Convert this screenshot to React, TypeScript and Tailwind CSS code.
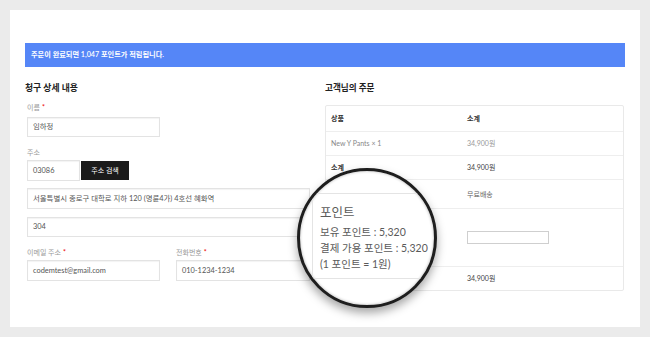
import React from 'react'

const font = { fontFamily: 'Lato, "Noto Sans CJK KR", sans-serif' }

function Label({ text, required }: { text: string; required?: boolean }) {
  return (
    <div className="h-[10px] text-[7px] leading-[10px] text-[#999]">
      {text}
      {required && <span className="ml-[2px] text-[#e00]">*</span>}
    </div>
  )
}

function Field({ value, className }: { value: string; className: string }) {
  return (
    <div
      className={`flex items-center border border-[#e3e3e3] bg-white px-[5px] text-[7.4px] text-[#555] shadow-[inset_0_1px_1px_rgba(0,0,0,0.05)] ${className}`}
    >
      {value}
    </div>
  )
}

const rows = [
  { left: '상품', right: '소계', h: 'h-[25px]', lc: 'text-[#333] font-semibold', rc: 'text-[#333] font-semibold' },
  { left: 'New Y Pants × 1', right: '34,900원', h: 'h-[24px]', lc: 'text-[#888]', rc: 'text-[#999]' },
  { left: '소계', right: '34,900원', h: 'h-[24px]', lc: 'text-[#333] font-semibold', rc: 'text-[#444]' },
  { left: '', right: '무료배송', h: 'h-[29px]', lc: 'text-[#333] font-semibold', rc: 'text-[#666]' },
]

export default function App() {
  return (
    <div className="relative h-[337px] w-[650px] overflow-hidden bg-[#ebebeb] p-[10px]" style={font}>
      <div className="h-[317px] bg-white px-[15px] pt-[33px]">
        <div className="flex h-[24px] items-center bg-[#5586f7] pl-[6px] text-[7.2px] font-semibold text-white">
          주문이 완료되면 1,047 포인트가 적립됩니다.
        </div>

        <div className="mt-[14px] flex">
          {/* billing details */}
          <div className="w-[285px]">
            <h2 className="h-[14px] text-[8.8px] font-bold leading-[14px] text-[#222]">청구 상세 내용</h2>
            <div className="ml-[2px]">
              <div className="mt-[7px]">
                <Label text="이름" required />
              </div>
              <Field value="임하정" className="mt-[5px] h-[20px] w-[133px]" />
              <div className="mt-[10px]">
                <Label text="주소" />
              </div>
              <div className="mt-[3px] flex items-center">
                <Field value="03086" className="h-[21px] w-[53px]" />
                <div className="ml-[1px] flex h-[19px] w-[48px] items-center justify-center bg-[#1b1b1b] text-[7px] text-white">
                  주소 검색
                </div>
              </div>
              <Field value="서울특별시 종로구 대학로 지하 120 (명륜4가) 4호선 혜화역" className="mt-[7px] h-[21px] w-[283px]" />
              <Field value="304" className="mt-[8px] h-[20px] w-[283px]" />
              <div className="mt-[10px] flex gap-[16px]">
                <div className="w-[133px]">
                  <Label text="이메일 주소" required />
                  <Field value="codemtest@gmail.com" className="mt-[3px] h-[21px] w-[133px]" />
                </div>
                <div className="w-[134px]">
                  <Label text="전화번호" required />
                  <Field value="010-1234-1234" className="mt-[3px] h-[21px] w-[134px]" />
                </div>
              </div>
            </div>
          </div>

          {/* order summary */}
          <div className="ml-[15px] w-[299px]">
            <h2 className="h-[14px] text-[8.6px] font-bold leading-[14px] text-[#222]">고객님의 주문</h2>
            <div className="mt-[10px] rounded-[2px] border border-[#e9e9e9] text-[7px]">
              {rows.map((r, i) => (
                <div key={i} className={`flex items-center ${r.h} ${i > 0 ? 'border-t border-[#eeeeee]' : ''}`}>
                  <div className={`w-[141px] pl-[5px] ${r.lc}`}>{r.left}</div>
                  <div className={r.rc}>{r.right}</div>
                </div>
              ))}
              <div className="flex h-[58px] items-center border-t border-[#eeeeee]">
                <div className="w-[141px]" />
                <div className="h-[13px] w-[82px] border border-[#cfcfcf] bg-white" />
              </div>
              <div className="flex h-[24px] items-center border-t border-[#eeeeee]">
                <div className="w-[141px]" />
                <div className="text-[#444]">34,900원</div>
              </div>
            </div>
          </div>
        </div>
      </div>

      {/* magnifier */}
      <div className="absolute left-[297px] top-[168px] h-[140px] w-[140px] overflow-hidden rounded-full border-[3px] border-[#1e1e1e] bg-white shadow-[0_5px_10px_rgba(0,0,0,0.35),inset_0_0_3px_rgba(0,0,0,0.3)]">
        <div className="ml-[12px] mt-[22px] h-[86px] border-b border-l border-t border-[#e4e4e4] pl-[7px] pt-[11px] text-[#5a5a5a]">
          <div className="text-[12.5px] leading-[15px]">포인트</div>
          <div className="mt-[4px] text-[10.5px] leading-[16px]">
            <div>보유 포인트 : 5,320</div>
            <div>결제 가용 포인트 : 5,320</div>
            <div>(1 포인트 = 1원)</div>
          </div>
        </div>
      </div>
    </div>
  )
}
